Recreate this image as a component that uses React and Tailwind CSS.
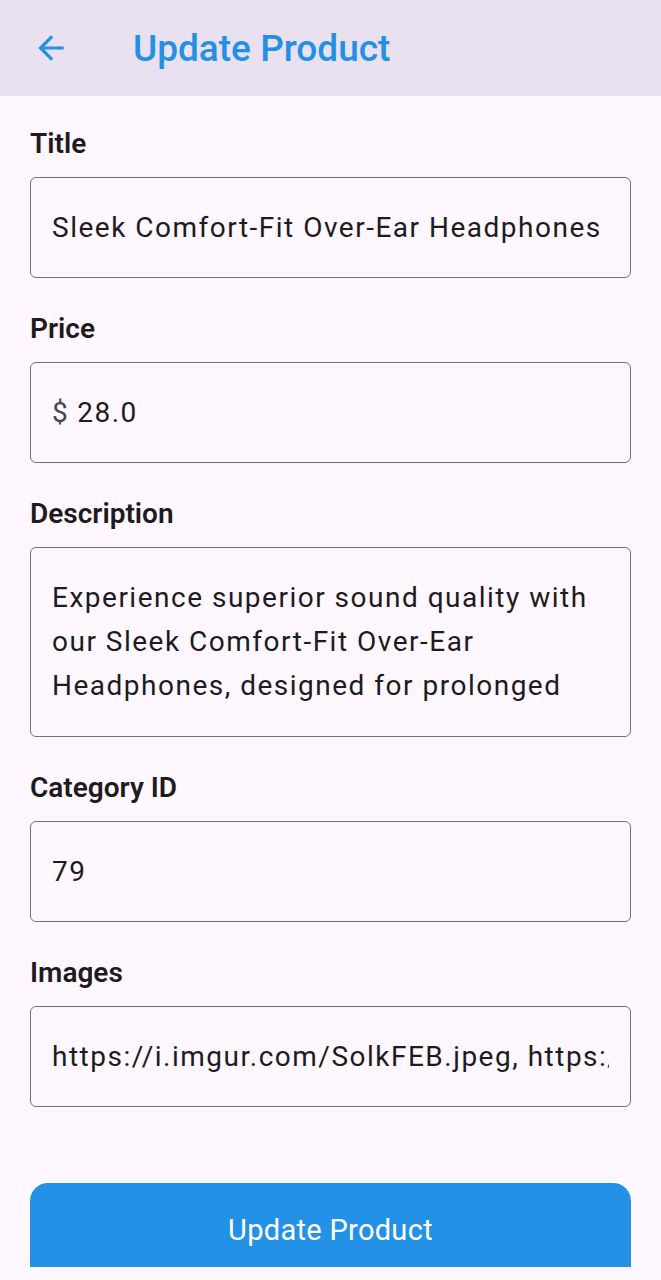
import React from 'react';

const fields = [
  { label: 'Title', value: 'Sleek Comfort-Fit Over-Ear Headphones' },
  { label: 'Price', value: '28.0', prefix: '$' },
  {
    label: 'Description',
    value:
      'Experience superior sound quality with our Sleek Comfort-Fit Over-Ear Headphones, designed for prolonged',
    multi: true,
  },
  { label: 'Category ID', value: '79' },
  { label: 'Images', value: 'https://i.imgur.com/SolkFEB.jpeg, https://i.imgur.com/KIGW49u.jpeg' },
];

export default function App() {
  return (
    <div
      className="w-[661px] h-[1280px] overflow-hidden bg-[#fef7ff] text-[#1d1b20]"
      style={{ fontFamily: 'Roboto, "Noto Sans", sans-serif' }}
    >
      {/* App bar */}
      <div className="h-[96px] bg-[#e9e0f0] flex items-center">
        <div className="w-[38px] h-[38px] ml-[32px] text-[#2390e4]">
          <svg viewBox="0 0 24 24" className="w-full h-full" fill="currentColor">
            <path d="M20 11H7.83l5.59-5.59L12 4l-8 8 8 8 1.41-1.41L7.83 13H20v-2z" />
          </svg>
        </div>
        <div className="ml-[63px] text-[37px] font-medium text-[#2390e4] leading-none">Update Product</div>
      </div>

      {/* Form */}
      <div className="px-[30px] pt-[16px]">
        {fields.map((f) => (
          <div key={f.label} className="mb-[36px]">
            <div className="text-[28px] font-semibold leading-[30px] mt-[17px] mb-[18px]">{f.label}</div>
            <div
              className={`border-[1.5px] border-[#746f7a] rounded-[6px] px-[21px] overflow-hidden ${
                f.multi ? 'h-[190px] pt-[28px]' : 'h-[101px] flex items-center'
              }`}
            >
              {f.multi ? (
                <div className="text-[28px] leading-[44px] tracking-[1.5px]">{f.value}</div>
              ) : (
                <div className="text-[28px] tracking-[1.5px] whitespace-nowrap overflow-hidden">
                  {f.prefix && <span className="text-[#49454f] mr-[8px]">{f.prefix}</span>}
                  {f.value}
                </div>
              )}
            </div>
          </div>
        ))}

        <div className="mt-[76px] h-[84px] pt-[12px] bg-[#2391e5] rounded-t-[18px] flex items-center justify-center">
          <span className="text-white text-[29px] tracking-[0.3px]">Update Product</span>
        </div>
      </div>
    </div>
  );
}
